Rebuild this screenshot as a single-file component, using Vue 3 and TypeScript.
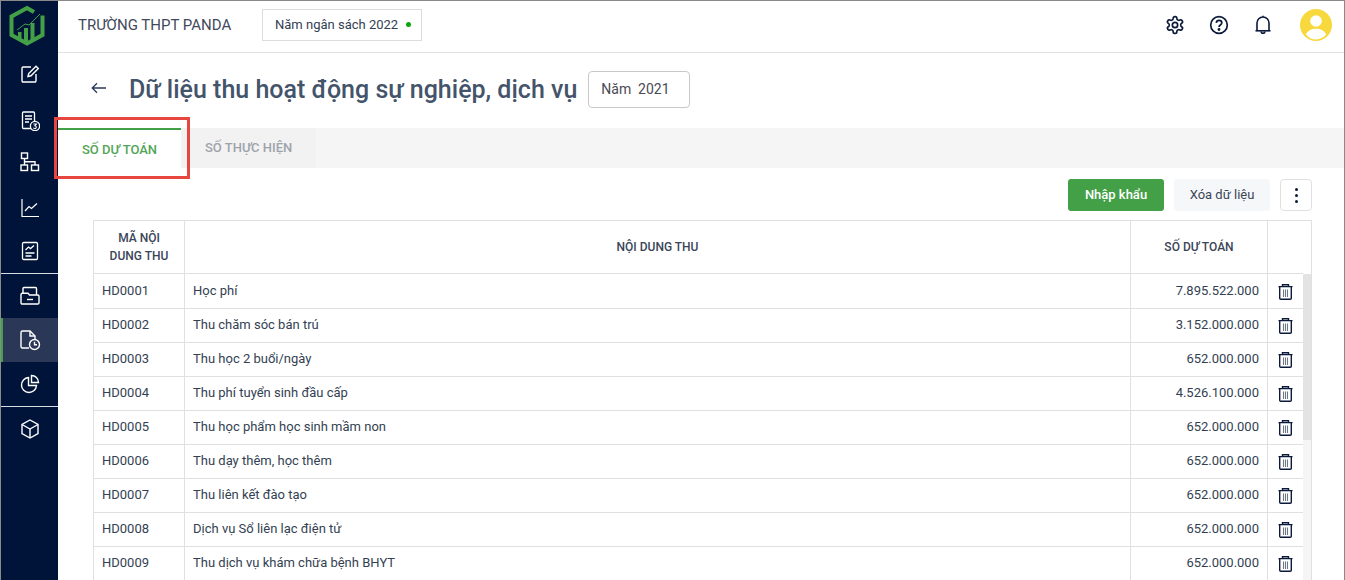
<script setup lang="ts">
interface Row {
  code: string
  name: string
  amount: string
}

const rows: Row[] = [
  { code: 'HD0001', name: 'Học phí', amount: '7.895.522.000' },
  { code: 'HD0002', name: 'Thu chăm sóc bán trú', amount: '3.152.000.000' },
  { code: 'HD0003', name: 'Thu học 2 buổi/ngày', amount: '652.000.000' },
  { code: 'HD0004', name: 'Thu phí tuyển sinh đầu cấp', amount: '4.526.100.000' },
  { code: 'HD0005', name: 'Thu học phẩm học sinh mầm non', amount: '652.000.000' },
  { code: 'HD0006', name: 'Thu dạy thêm, học thêm', amount: '652.000.000' },
  { code: 'HD0007', name: 'Thu liên kết đào tạo', amount: '652.000.000' },
  { code: 'HD0008', name: 'Dịch vụ Sổ liên lạc điện tử', amount: '652.000.000' },
  { code: 'HD0009', name: 'Thu dịch vụ khám chữa bệnh BHYT', amount: '652.000.000' },
]
</script>

<template>
  <div class="app">
    <aside class="sidebar">
      <div class="logo">
        <svg width="38" height="42" viewBox="0 0 38 42" fill="none">
          <path d="M26 7 19 3 3.500 11.500V30L19 38.500 34.500 30V10.500" stroke="#43a047" stroke-width="4" />
          <path d="M10 27h3.500v7.500L10 32.500zM16 23h4v14h-4zM22.500 18h4v16.500l-4 2.300z" fill="#43a047" />
          <path d="M9 25l8-6 4 1L32 9" stroke="#43a047" stroke-width="1" />
        </svg>
      </div>
      <div class="nav-group first">
        <a class="nav-item">
          <svg width="20" height="20" viewBox="0 0 20 20" fill="none" stroke="#fff" stroke-width="1.400">
            <path d="M11 3H3.200a1.200 1.200 0 0 0-1.200 1.200v12.600A1.200 1.200 0 0 0 3.200 18h11.600a1.200 1.200 0 0 0 1.200-1.200V10" />
            <path d="M8 12.500l.7-3L16 2.200l2.300 2.300-7.300 7.300z" />
          </svg>
        </a>
        <a class="nav-item">
          <svg width="20" height="20" viewBox="0 0 20 20" fill="none" stroke="#fff" stroke-width="1.300">
            <path d="M11 17.500H3.500a1 1 0 0 1-1-1V2a1 1 0 0 1 1-1h10a1 1 0 0 1 1 1v8" />
            <path d="M5 5h7M5 8h7M5 11h4" />
            <circle cx="15" cy="15" r="4.600" />
            <path d="M13.400 13h3l-1.500 1.700c1.800 0 1.900 2.800 0 2.800-.7 0-1.200-.3-1.500-.8" stroke-width="1.100" />
          </svg>
        </a>
        <a class="nav-item">
          <svg width="20" height="20" viewBox="0 0 20 20" fill="none" stroke="#fff" stroke-width="1.400">
            <rect x="1.500" y="1" width="6" height="5.500" />
            <rect x="1" y="13" width="6.500" height="5.500" />
            <rect x="11.500" y="13" width="7" height="5.500" />
            <path d="M4.500 6.500V13M4.500 9.800h10.500V13" />
          </svg>
        </a>
        <a class="nav-item">
          <svg width="20" height="20" viewBox="0 0 20 20" fill="none" stroke="#fff" stroke-width="1.200">
            <path d="M2 1v17.500h17" />
            <path d="M5 13l4-4.500 2.500 2L17 5.500" />
          </svg>
        </a>
        <a class="nav-item">
          <svg width="20" height="20" viewBox="0 0 20 20" fill="none" stroke="#fff" stroke-width="1.300">
            <rect x="2.500" y="1.500" width="15" height="17" rx="1.200" />
            <path d="M5.500 9l3-3 2 1.600L14 4.500M5.500 12h9M5.500 15h6" />
          </svg>
        </a>
      </div>
      <div class="nav-group">
        <a class="nav-item">
          <svg width="20" height="20" viewBox="0 0 20 20" fill="none" stroke="#fff" stroke-width="1.400">
            <path d="M3 7V2.500a1 1 0 0 1 1-1h11.500a1 1 0 0 1 1 1V9" />
            <path d="M1 8.500A1.200 1.200 0 0 1 2.200 7.300H8l1.500 1.700h8.300A1.200 1.200 0 0 1 19 10.200v6.600a1.200 1.200 0 0 1-1.200 1.200H2.200A1.200 1.200 0 0 1 1 16.800z" />
            <path d="M7 13.500h6" />
          </svg>
        </a>
        <a class="nav-item active">
          <svg width="22" height="22" viewBox="0 0 22 22" fill="none" stroke="#fff" stroke-width="1.400">
            <path d="M10 19H3.500A1.500 1.500 0 0 1 2 17.500V3.500A1.500 1.500 0 0 1 3.500 2H11l5 5v3" />
            <path d="M11 2v5h5" />
            <circle cx="15.500" cy="15.500" r="5" />
            <path d="M15.500 12.800v3h2.500" />
          </svg>
        </a>
        <a class="nav-item">
          <svg width="20" height="20" viewBox="0 0 20 20" fill="none" stroke="#fff" stroke-width="1.400">
            <path d="M8.500 3.500a7.500 7.500 0 1 0 8 8h-8z" />
            <path d="M11.500 1.500a7 7 0 0 1 7 7h-7z" />
          </svg>
        </a>
      </div>
      <div class="nav-group">
        <a class="nav-item">
          <svg width="20" height="20" viewBox="0 0 20 20" fill="none" stroke="#fff" stroke-width="1.400">
            <path d="M10 1l8 4.500v9L10 19l-8-4.500v-9z" />
            <path d="M2 5.500l8 4.500 8-4.500M10 10v9" />
          </svg>
        </a>
      </div>
    </aside>

    <div class="main">
      <header class="topbar">
        <span class="school">TRƯỜNG THPT PANDA</span>
        <div class="budget">Năm ngân sách 2022<i class="dot" /></div>
        <div class="top-icons">
          <svg width="20" height="20" viewBox="0 0 24 24" fill="none" stroke="#0b1a3a" stroke-width="2">
            <path d="M12.220 2h-.44a2 2 0 0 0-2 2v.18a2 2 0 0 1-1 1.730l-.43.25a2 2 0 0 1-2 0l-.15-.08a2 2 0 0 0-2.730.73l-.22.38a2 2 0 0 0 .73 2.730l.15.1a2 2 0 0 1 1 1.720v.51a2 2 0 0 1-1 1.740l-.15.09a2 2 0 0 0-.73 2.730l.22.38a2 2 0 0 0 2.730.73l.15-.08a2 2 0 0 1 2 0l.43.25a2 2 0 0 1 1 1.730V20a2 2 0 0 0 2 2h.44a2 2 0 0 0 2-2v-.18a2 2 0 0 1 1-1.730l.43-.25a2 2 0 0 1 2 0l.15.08a2 2 0 0 0 2.730-.73l.22-.39a2 2 0 0 0-.73-2.730l-.15-.08a2 2 0 0 1-1-1.740v-.5a2 2 0 0 1 1-1.740l.15-.09a2 2 0 0 0 .73-2.730l-.22-.38a2 2 0 0 0-2.730-.73l-.15.08a2 2 0 0 1-2 0l-.43-.25a2 2 0 0 1-1-1.730V4a2 2 0 0 0-2-2z" />
            <circle cx="12" cy="12" r="3.200" />
          </svg>
          <svg width="20" height="20" viewBox="0 0 20 20" fill="none" stroke="#0b1a3a" stroke-width="1.700">
            <circle cx="10" cy="10" r="8.300" />
            <path d="M7.300 7.800A2.700 2.700 0 0 1 10 5.400c1.600 0 2.800 1 2.800 2.400 0 2.200-2.800 2.200-2.800 4.200" />
            <circle cx="10" cy="14.500" r=".6" fill="#0b1a3a" />
          </svg>
          <svg width="20" height="20" viewBox="0 0 20 20" fill="none" stroke="#0b1a3a" stroke-width="1.600">
            <path d="M4 15.500V8a6 6 0 0 1 12 0v7.500" />
            <path d="M2.500 15.800h15" />
            <path d="M8.200 16.500a1.800 1.800 0 0 0 3.600 0" />
            <path d="M10 .8v1" />
          </svg>
        </div>
        <div class="avatar">
          <svg width="32" height="32" viewBox="0 0 32 32">
            <circle cx="16" cy="16" r="16" fill="#f7d83d" />
            <circle cx="16" cy="12" r="5.800" fill="#fff" />
            <path d="M5.800 25.500C8 21.500 11.500 19.800 16 19.800s8 1.700 10.200 5.700A14.500 14.500 0 0 1 16 30.500c-4 0-7.600-1.900-10.200-5z" fill="#fff" />
          </svg>
        </div>
      </header>

      <div class="title-row">
        <svg class="back" width="16" height="12" viewBox="0 0 16 12" fill="none" stroke="#2b3a55" stroke-width="1.300">
          <path d="M15 6H1.500M6 1.200 1.200 6 6 10.800" />
        </svg>
        <h1>Dữ liệu thu hoạt động sự nghiệp, dịch vụ</h1>
        <div class="year">Năm&nbsp; 2021</div>
      </div>

      <nav class="tabs">
        <div class="tab on">SỐ DỰ TOÁN</div>
        <div class="tab">SỐ THỰC HIỆN</div>
      </nav>

      <div class="toolbar">
        <button class="btn primary">Nhập khẩu</button>
        <button class="btn plain">Xóa dữ liệu</button>
        <button class="btn more" aria-label="more"><i /><i /><i /></button>
      </div>

      <div class="table">
        <div class="row head">
          <div class="cell center">MÃ NỘI<br />DUNG THU</div>
          <div class="cell center">NỘI DUNG THU</div>
          <div class="cell center">SỐ DỰ TOÁN</div>
          <div class="cell" />
        </div>
        <div class="body">
          <div class="rows">
            <div v-for="r in rows" :key="r.code" class="row">
              <div class="cell">{{ r.code }}</div>
              <div class="cell">{{ r.name }}</div>
              <div class="cell right">{{ r.amount }}</div>
              <div class="cell trash">
                <svg width="15" height="16" viewBox="0 0 15 16" fill="none" stroke="#0b1a3a" stroke-width="1.400">
                  <path d="M.5 2.600h14M4.500 2.300V.8h6v1.500" />
                  <path d="M1.700 3v11.300a1 1 0 0 0 1 1h9.600a1 1 0 0 0 1-1V3" />
                  <path d="M5.500 5.500v7.500M7.500 5.500v7.500M9.500 5.500v7.500" stroke="#6f7684" stroke-width="1.100" />
                </svg>
              </div>
            </div>
          </div>
          <div class="track"><div class="thumb" /></div>
        </div>
      </div>
    </div>

    <div class="highlight" />
  </div>
</template>

<style>
html,
body {
  margin: 0;
  overflow: hidden;
}
</style>

<style scoped>
.app {
  position: relative;
  display: flex;
  box-sizing: border-box;
  width: 1345px;
  height: 580px;
  overflow: hidden;
  background: #fff;
  border-top: 1px solid #8a8a8a;
  border-left: 1px solid #8a8a8a;
  border-right: 1px solid #8a8a8a;
  font-family: Roboto, "Liberation Sans", sans-serif;
  color: #333f52;
}

/* sidebar */
.sidebar {
  flex: none;
  width: 57px;
  background: #001439;
}
.logo {
  display: flex;
  justify-content: center;
  align-items: flex-start;
  height: 53px;
  padding: 4px 5px 0 0;
  box-sizing: border-box;
}
.nav-group {
  border-top: 1px solid #d8dbe2;
}
.nav-group.first {
  border-top: none;
  height: 219px;
}
.nav-item {
  display: flex;
  align-items: center;
  justify-content: center;
  height: 44px;
  box-sizing: border-box;
}
.first .nav-item:nth-child(1) svg {
  margin-bottom: 4px;
}
.first .nav-item:nth-child(2) svg {
  margin-top: 2px;
}
.first .nav-item:nth-child(3) svg {
  margin-bottom: 4px;
}
.first .nav-item:nth-child(5) svg {
  margin-bottom: 2px;
}
.nav-item.active {
  background: #2a3756;
  border-left: 2px solid #43a047;
  padding-right: 2px;
}

/* top bar */
.main {
  flex: 1;
  min-width: 0;
  display: flex;
  flex-direction: column;
}
.topbar {
  flex: none;
  display: flex;
  align-items: center;
  height: 52px;
  box-sizing: border-box;
  padding: 0 12px 4px 20px;
  border-bottom: 1px solid #e2e2e2;
}
.school {
  width: 184px;
  font-size: 15px;
  color: #3f4a5c;
}
.budget {
  display: flex;
  align-items: center;
  box-sizing: border-box;
  width: 160px;
  height: 32px;
  padding-left: 12px;
  border: 1px solid #dcdcdc;
  font-size: 13px;
}
.dot {
  width: 5px;
  height: 5px;
  margin-left: 8px;
  border-radius: 50%;
  background: #0aa70a;
}
.top-icons {
  display: flex;
  align-items: center;
  gap: 24px;
  margin-left: auto;
  margin-right: 27px;
}
.avatar {
  height: 32px;
}

/* title */
.title-row {
  flex: none;
  display: flex;
  align-items: center;
  box-sizing: border-box;
  height: 75px;
  padding: 0 0 2px 33px;
}
.back {
  margin-right: 22px;
  margin-top: -3px;
}
h1 {
  margin: 0 11px 0 0;
  font-size: 25px;
  font-weight: 500;
  color: #44546a;
}
.year {
  box-sizing: border-box;
  width: 102px;
  height: 37px;
  line-height: 34px;
  padding-left: 12px;
  border: 1px solid #c8c8c8;
  border-radius: 4px;
  font-size: 14px;
  color: #4a4a55;
}

/* tabs */
.tabs {
  flex: none;
  display: flex;
  height: 40px;
  background: #f5f5f5;
}
.tab {
  width: 135px;
  box-sizing: border-box;
  padding-left: 24px;
  line-height: 36px;
  font-size: 13px;
  font-weight: 500;
  background: #f2f2f2;
  color: #9ea3ab;
  border-top: 2px solid transparent;
}
.tab.on {
  width: 123px;
  line-height: 40px;
  background: #fff;
  color: #52a556;
  border-top-color: #43a047;
}

/* toolbar */
.toolbar {
  flex: none;
  display: flex;
  justify-content: flex-end;
  align-items: center;
  gap: 10px;
  box-sizing: border-box;
  height: 52px;
  padding: 2px 32px 0 0;
}
.btn {
  box-sizing: border-box;
  height: 32px;
  padding: 0 0 2px;
  border: none;
  border-radius: 3px;
  font: 13px Roboto, "Liberation Sans", sans-serif;
}
.primary {
  width: 96px;
  background: #43a047;
  color: #fff;
  font-weight: 500;
}
.plain {
  width: 96px;
  background: #f6f7f9;
  color: #3b4558;
}
.more {
  display: flex;
  flex-direction: column;
  align-items: center;
  justify-content: center;
  gap: 3px;
  width: 32px;
  padding: 0;
  background: #fff;
  border: 1px solid #e0e0e0;
  border-radius: 4px;
}
.more i {
  width: 3px;
  height: 3px;
  border-radius: 50%;
  background: #0b1a3a;
}

/* table */
.table {
  flex: none;
  box-sizing: border-box;
  width: 1219px;
  margin-left: 35px;
  border-top: 1px solid #e0e0e0;
  border-left: 1px solid #e0e0e0;
  border-right: 1px solid #e0e0e0;
  font-size: 13px;
}
.row {
  display: grid;
  grid-template-columns: 91px 946px 137px 35px;
  height: 34px;
  box-sizing: border-box;
  border-bottom: 1px solid #e0e0e0;
}
.rows .row:first-child {
  height: 35px;
}
.row.head {
  height: 53px;
  width: 1209px;
  font-size: 12px;
  font-weight: 500;
  line-height: 18px;
  color: #3b4558;
}
.cell {
  display: flex;
  align-items: center;
  box-sizing: border-box;
  padding: 0 8px;
  border-right: 1px solid #e0e0e0;
}
.cell:last-child {
  border-right: none;
}
.rows .cell {
  padding-bottom: 2px;
}
.rows .row:first-child .cell {
  padding-bottom: 1px;
}
.center {
  justify-content: center;
  text-align: center;
}
.right {
  justify-content: flex-end;
}
.rows .row .trash {
  justify-content: center;
  padding: 2px 0 1px;
}
.body {
  display: flex;
}
.rows {
  width: 1209px;
}
.track {
  width: 8px;
  background: #f5f5f5;
}
.thumb {
  height: 166px;
  background: #e3e3e3;
}

/* red annotation round the active tab */
.highlight {
  position: absolute;
  left: 53px;
  top: 116px;
  width: 136px;
  height: 62px;
  box-sizing: border-box;
  border: 3px solid #e8473f;
}
</style>
